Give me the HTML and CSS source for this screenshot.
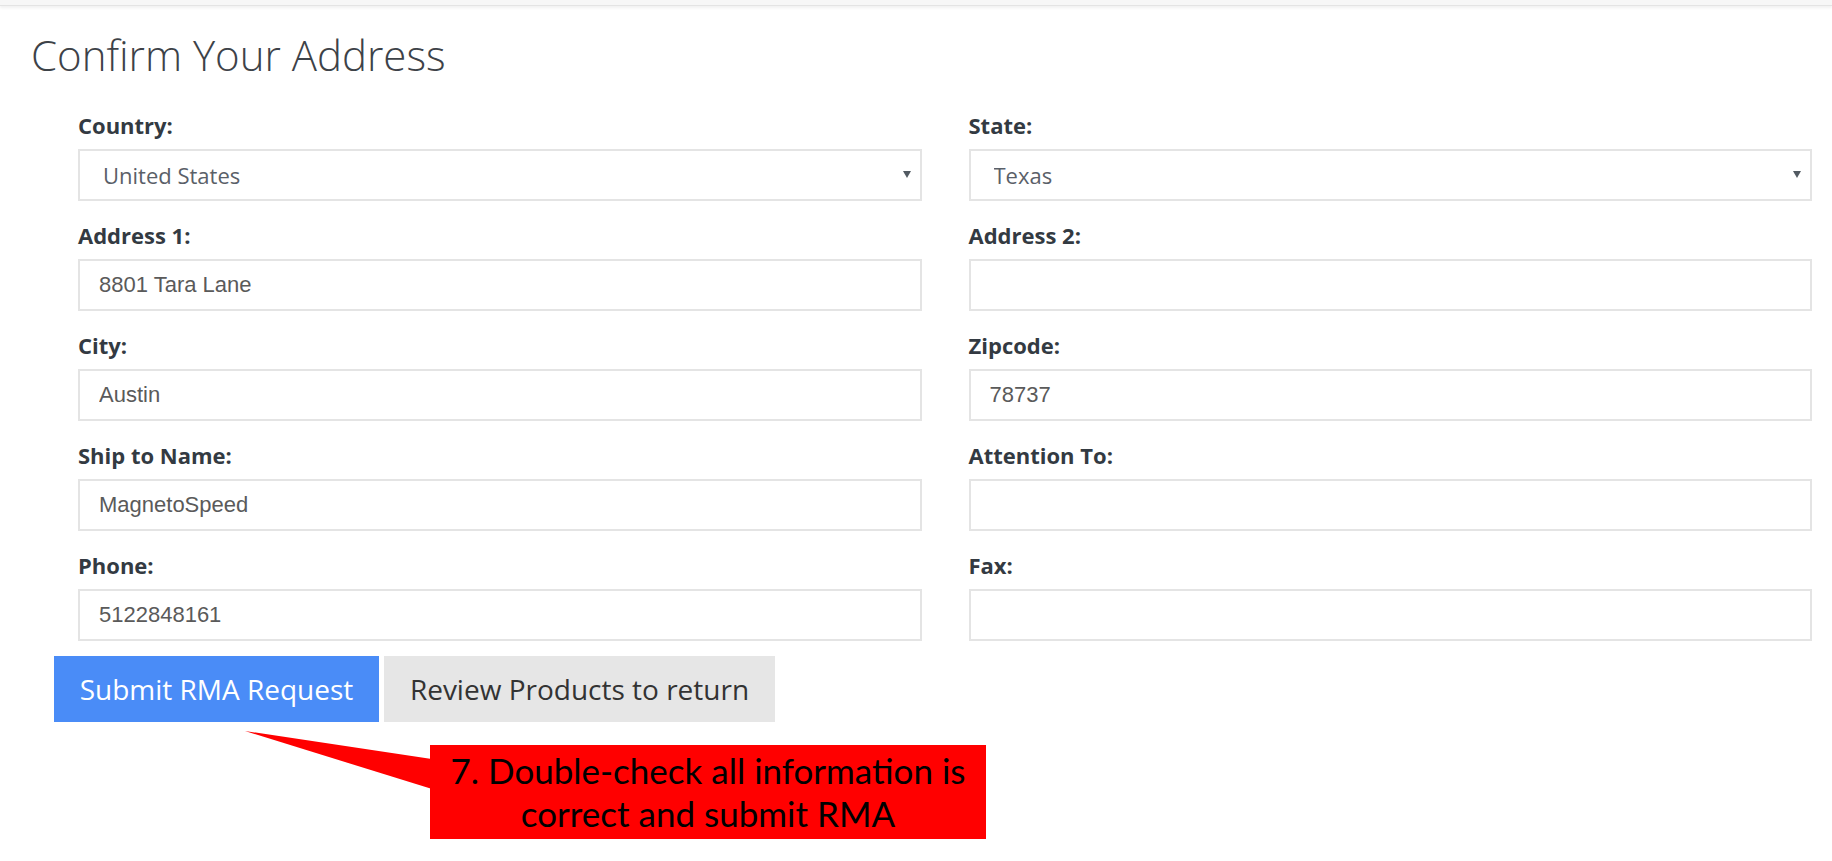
FILE: index.html
```html
<!DOCTYPE html>
<html lang="en">
<head>
  <meta charset="UTF-8" />
  <meta name="viewport" content="width=device-width, initial-scale=1.0"/>
  <title>Confirm Your Address</title>
  <link rel="stylesheet" href="styles.css">
</head>
<body>
  <div class="topbar"></div>

  <div class="page">
    <h1 class="title">Confirm Your Address</h1>

    <form class="address-form" onsubmit="return false;">
      <div class="fields">
        <div class="field">
          <label for="country">Country:</label>
          <div class="select-wrap">
            <select id="country"><option>United States</option></select>
          </div>
        </div>
        <div class="field">
          <label for="state">State:</label>
          <div class="select-wrap">
            <select id="state"><option>Texas</option></select>
          </div>
        </div>

        <div class="field">
          <label for="address1">Address 1:</label>
          <input type="text" id="address1" value="8801 Tara Lane" />
        </div>
        <div class="field">
          <label for="address2">Address 2:</label>
          <input type="text" id="address2" value="" />
        </div>

        <div class="field">
          <label for="city">City:</label>
          <input type="text" id="city" value="Austin" />
        </div>
        <div class="field">
          <label for="zipcode">Zipcode:</label>
          <input type="text" id="zipcode" value="78737" />
        </div>

        <div class="field">
          <label for="shipName">Ship to Name:</label>
          <input type="text" id="shipName" value="MagnetoSpeed" />
        </div>
        <div class="field">
          <label for="attention">Attention To:</label>
          <input type="text" id="attention" value="" />
        </div>

        <div class="field">
          <label for="phone">Phone:</label>
          <input type="text" id="phone" value="5122848161" />
        </div>
        <div class="field">
          <label for="fax">Fax:</label>
          <input type="text" id="fax" value="" />
        </div>
      </div>

      <div class="actions">
        <button type="submit" class="btn btn-primary">Submit RMA Request</button>
        <button type="button" class="btn btn-default">Review Products to return</button>
      </div>
    </form>

    <!-- annotation -->
    <div class="callout">
      <svg class="callout-arrow" width="200" height="70" viewBox="0 0 200 70">
        <polygon points="0,0 200,30 200,62" fill="#ff0000" />
      </svg>
      <div class="callout-box">7. Double-check all information is<br>correct and submit RMA</div>
    </div>
  </div>
</body>
</html>
```

FILE: styles.css
```css
body {
  margin: 0;
  background: #fff;
  font-family: "Open Sans", Arial, sans-serif;
  color: #333;
}
.topbar {
  height: 5px;
  background: #f7f7f7;
  border-bottom: 1px solid #e4e4e4;
  box-shadow: 0 2px 3px rgba(0,0,0,0.06);
}
.title {
  margin: 24px 0 0 31px;
  font-size: 42px;
  font-weight: 300;
  line-height: 50px;
  color: #3d4248;
}
.fields {
  display: grid;
  grid-template-columns: 1fr 1fr;
  column-gap: 47px;
  row-gap: 21px;
  margin-top: 32px;
  padding: 0 20px 0 78px;
}
.field label {
  display: block;
  font-size: 22px;
  font-weight: 700;
  line-height: 27px;
  margin-bottom: 10px;
  color: #333a42;
}
.field input,
.field select {
  display: block;
  width: 100%;
  height: 52px;
  box-sizing: border-box;
  border: 2px solid #e4e4e4;
  border-radius: 0;
  background: #fff;
  color: #555;
  outline: none;
}
.field input {
  padding: 0 19px;
  font-family: "Liberation Sans", Arial, sans-serif;
  font-size: 22px;
  color: #5a5a5a;
}
.field select {
  appearance: none;
  -webkit-appearance: none;
  padding: 0 23px;
  font-family: "Open Sans", Arial, sans-serif;
  font-size: 22px;
  color: #5a6068;
}
.select-wrap {
  position: relative;
}
.select-wrap::after {
  content: "";
  position: absolute;
  right: 11px;
  top: 22px;
  border-left: 4px solid transparent;
  border-right: 4px solid transparent;
  border-top: 7px solid #525a62;
}
.actions {
  display: flex;
  gap: 5px;
  margin-top: 15px;
  padding-left: 54px;
}
.btn {
  height: 66px;
  border: none;
  border-radius: 0;
  font-family: "Open Sans", Arial, sans-serif;
  font-size: 28px;
  line-height: 36px;
  cursor: pointer;
}
.btn-primary {
  width: 325px;
  background: #4a8cf7;
  color: #fff;
}
.btn-default {
  width: 391px;
  background: #e6e6e6;
  color: #333;
}
.callout {
  position: relative;
  padding-top: 23px;
}
.callout-arrow {
  position: absolute;
  left: 245px;
  top: 9px;
}
.callout-box {
  position: relative;
  margin-left: 430px;
  width: 556px;
  height: 94px;
  box-sizing: border-box;
  padding-top: 4px;
  background: #ff0000;
  color: #000;
  font-family: Lato, "Open Sans", sans-serif;
  font-size: 35px;
  line-height: 43px;
  text-align: center;
}
```
